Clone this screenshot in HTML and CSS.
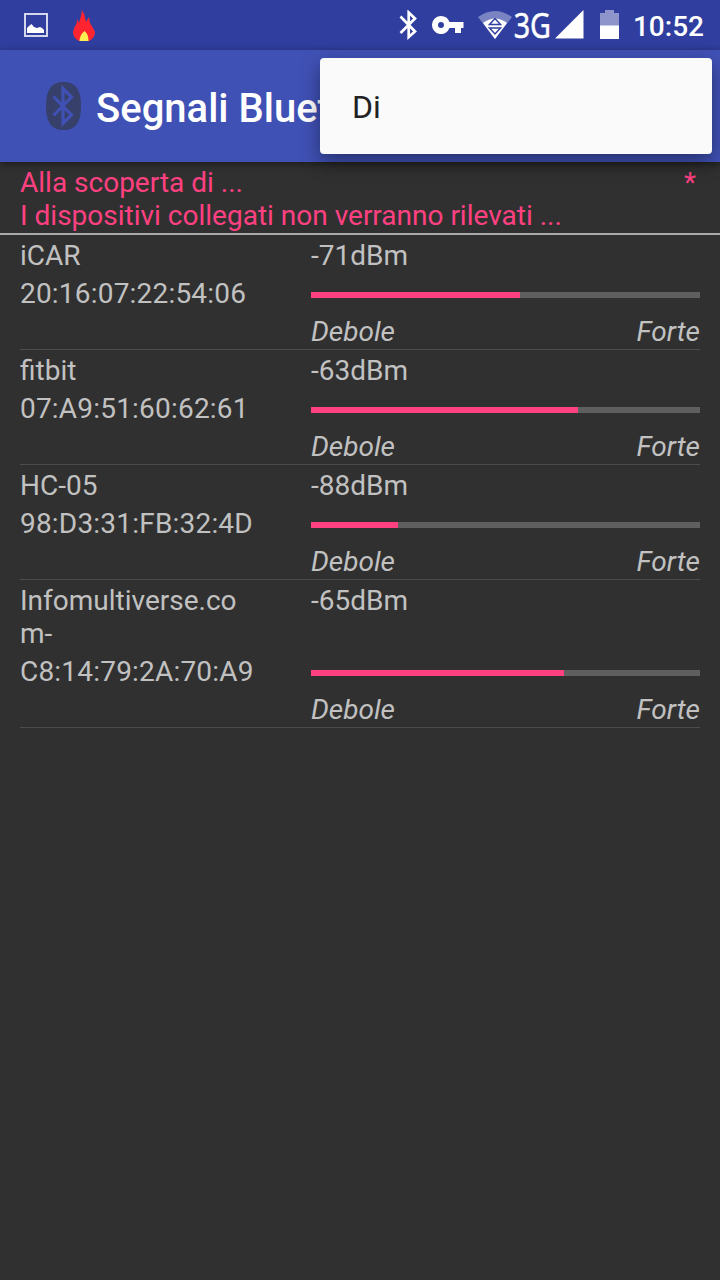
FILE: index.html
```html
<!DOCTYPE html>
<html lang="it">
<head>
    <meta charset="UTF-8">
    <meta name="viewport" content="width=device-width, initial-scale=1.0">
    <title>Segnali Bluetooth</title>
    <link rel="stylesheet" href="styles.css">
</head>
<body>
    <!-- Status bar -->
    <div class="status-bar">
        <svg class="icon-picture" width="24" height="24" viewBox="0 0 24 24">
            <rect x="1" y="1" width="22" height="22" fill="none" stroke="#d3d6ec" stroke-width="2"/>
            <path d="M3 20v-5l2-2 2.500-2 2.500 3 3 1 3-1 2 1 2 2v3z" fill="#fff"/>
        </svg>
        <svg class="icon-fire" width="22" height="32" viewBox="0 0 22 32">
            <path d="M9 0l2.500 5 1.500 7 3-5 1 6 3 5 2 4c0 4-2 7-6 9H6c-4-2-6-5-6-9l1.500-5 2-3 .5-5 2 4 2-7z" fill="#ff2430"/>
            <path d="M6.500 31c0-4 1.500-7 5-10 3 2.500 4 5.500 4 10z" fill="#ffef50"/>
        </svg>
        <div class="status-right">
            <svg class="icon-bluetooth" width="18" height="30" viewBox="0 0 18 30">
                <path d="M1.500 6.500L16 21.500 9.700 27V2.500L16 8.500 1.500 23" fill="none" stroke="#fff" stroke-width="2.700"/>
            </svg>
            <svg class="icon-key" width="32" height="18" viewBox="0 0 32 18">
                <path fill-rule="evenodd" d="M9 0a9 9 0 0 1 8.500 6H31.500v6H29v5h-6v-5h-5.500A9 9 0 1 1 9 0zM9 6a3 3 0 1 0 0 6 3 3 0 0 0 0-6z" fill="#fff"/>
            </svg>
            <svg class="icon-wifi" width="34" height="28" viewBox="0 0 34 28">
                <path d="M0 6Q17-6 34 6L17 28z" fill="#7a84c3"/>
                <path d="M5 12Q17 3 29 12L17 28z" fill="#fff"/>
                <path d="M11.500 13.500L17 7.500l5.500 6zM11.500 17L17 23l5.500-6z" fill="#fff" stroke="#303f9f" stroke-width="1.500"/>
            </svg>
            <span class="network">3G</span>
            <svg class="icon-signal" width="29" height="29" viewBox="0 0 29 29">
                <path d="M28.500 0v28.500H0z" fill="#fff"/>
            </svg>
            <svg class="icon-battery" width="19" height="29" viewBox="0 0 19 29">
                <path d="M5 0h9v3h5v13H0V3h5z" fill="#8d95cb"/>
                <path d="M0 15.500h19V29H0z" fill="#fff"/>
            </svg>
            <span class="clock">10:52</span>
        </div>
    </div>

    <!-- App bar -->
    <div class="app-bar">
        <svg class="app-logo" width="35" height="48" viewBox="0 0 35 48">
            <path d="M17.500 0C29 0 35 7 35 24S29 48 17.500 48 0 41 0 24 6 0 17.500 0z" fill="#37406b"/>
            <path d="M7.500 14.500L25.500 33 17 41.500V6.500L25.500 15 7.500 33.500" fill="none" stroke="#4051b5" stroke-width="3.200"/>
        </svg>
        <h1 class="title">Segnali Bluetooth</h1>
        <div class="menu">Di</div>
    </div>

    <div class="discovery">
        <div class="discovery-line"><span>Alla scoperta di ...</span><span class="star">*</span></div>
        <div class="discovery-line note">I dispositivi collegati non verranno rilevati ...</div>
    </div>

    <div class="devices">
        <div class="device">
            <div class="name">iCAR</div>
            <div class="level">-71dBm</div>
            <div class="address">20:16:07:22:54:06</div>
            <div class="bar"><div class="fill" style="width: 209px"></div></div>
            <div class="scale"><span>Debole</span><span>Forte</span></div>
        </div>
        <div class="device">
            <div class="name">fitbit</div>
            <div class="level">-63dBm</div>
            <div class="address">07:A9:51:60:62:61</div>
            <div class="bar"><div class="fill" style="width: 267px"></div></div>
            <div class="scale"><span>Debole</span><span>Forte</span></div>
        </div>
        <div class="device">
            <div class="name">HC-05</div>
            <div class="level">-88dBm</div>
            <div class="address">98:D3:31:FB:32:4D</div>
            <div class="bar"><div class="fill" style="width: 87px"></div></div>
            <div class="scale"><span>Debole</span><span>Forte</span></div>
        </div>
        <div class="device">
            <div class="name">Infomultiverse.co<br>m-</div>
            <div class="level">-65dBm</div>
            <div class="address">C8:14:79:2A:70:A9</div>
            <div class="bar"><div class="fill" style="width: 253px"></div></div>
            <div class="scale"><span>Debole</span><span>Forte</span></div>
        </div>
    </div>
</body>
</html>
```

FILE: styles.css
```css
* {
    box-sizing: border-box;
}
body {
    margin: 0;
    min-height: 1280px;
    background-color: #303030;
    color: #c1c1c1;
    font-family: Roboto, sans-serif;
    font-size: 28px;
    line-height: 33px;
}
svg {
    display: block;
    flex: none;
}
.status-bar {
    display: flex;
    align-items: flex-start;
    height: 50px;
    padding-left: 24px;
    background-color: #303f9f;
}
.icon-picture {
    margin-top: 13px;
}
.icon-fire {
    margin: 10px 0 0 25px;
}
.status-right {
    display: flex;
    align-items: flex-start;
    margin-left: auto;
    padding-right: 16px;
    color: #fff;
}
.icon-bluetooth {
    margin: 10px 15px 0 0;
}
.icon-key {
    margin: 16px 14px 0 0;
}
.icon-wifi {
    margin-top: 11px;
}
.network {
    width: 43px;
    padding-left: 2px;
    font-family: "Noto Sans", sans-serif;
    font-size: 35px;
    line-height: 50px;
    transform: scaleX(0.82);
    transform-origin: left;
    -webkit-text-stroke: 0.5px #fff;
}
.icon-signal {
    margin: 10px 16px 0 0;
}
.icon-battery {
    margin: 10px 14px 0 0;
}
.clock {
    font-size: 28px;
    font-weight: 500;
    line-height: 53px;
}
.app-bar {
    position: relative;
    display: flex;
    align-items: center;
    height: 112px;
    padding-left: 46px;
    background-color: #4051b5;
    box-shadow: 0 2px 8px rgba(0, 0, 0, 0.45);
}
.title {
    width: 226px;
    margin: 5px 0 0 15px;
    overflow: hidden;
    white-space: nowrap;
    color: #fff;
    font-size: 40px;
    font-weight: 500;
    line-height: 48px;
}
.menu {
    position: absolute;
    top: 8px;
    right: 8px;
    width: 392px;
    height: 96px;
    padding-left: 32px;
    border-radius: 4px;
    background-color: #fafafa;
    box-shadow: 0 8px 20px rgba(0, 0, 0, 0.4);
    color: #212121;
    font-size: 32px;
    line-height: 98px;
}
.discovery {
    padding: 4px 20px 1px;
    border-bottom: 2px solid #a9a9a9;
    color: #ff4081;
}
.discovery-line {
    display: flex;
    justify-content: space-between;
}
.star {
    margin-right: 4px;
}
.devices {
    padding: 0 20px;
}
.device {
    display: grid;
    grid-template-columns: 291px 1fr;
    row-gap: 5px;
    padding: 4px 0 1px;
    border-bottom: 1px solid #4c4c4c;
}
.address {
    letter-spacing: 0.2px;
}
.bar {
    align-self: center;
    height: 6px;
    margin-top: 3px;
    background-color: #5f5f5f;
}
.fill {
    height: 6px;
    background-color: #ff4081;
}
.scale {
    grid-column: 2;
    display: flex;
    justify-content: space-between;
    font-style: italic;
}
```
